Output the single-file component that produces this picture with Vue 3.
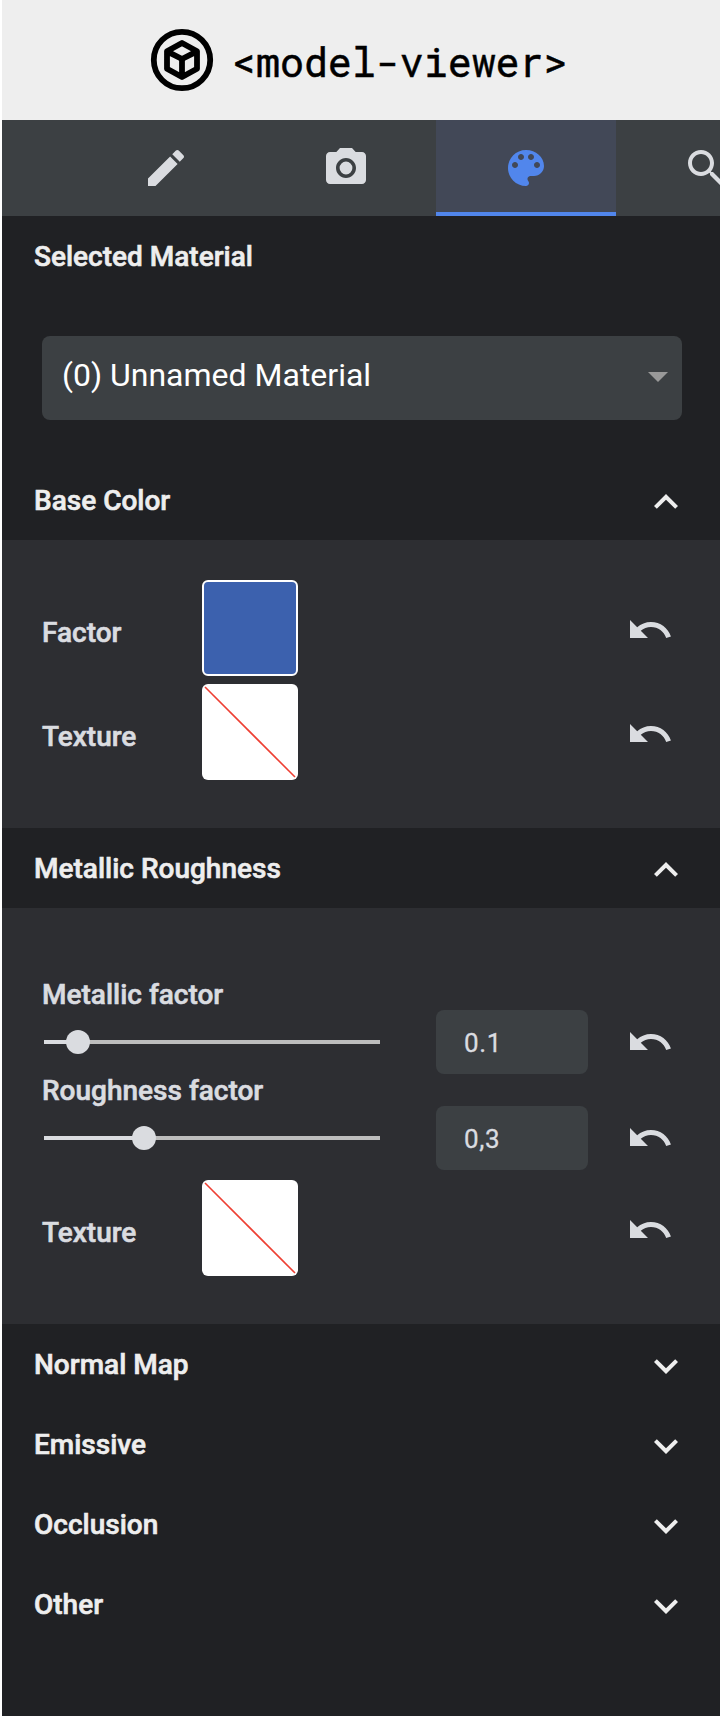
<script setup>
import { ref } from 'vue'

const ICONS = {
  edit: 'M3 17.25V21h3.75L17.81 9.94l-3.75-3.75L3 17.25zM20.71 7.04c.39-.39.39-1.02 0-1.41l-2.34-2.34c-.39-.39-1.02-.39-1.41 0l-1.83 1.83 3.75 3.75 1.83-1.83z',
  camera: 'M8.8 12a3.2 3.2 0 1 0 6.4 0a3.2 3.2 0 1 0-6.4 0zM9 2L7.17 4H4c-1.1 0-2 .9-2 2v12c0 1.1.9 2 2 2h16c1.1 0 2-.9 2-2V6c0-1.1-.9-2-2-2h-3.17L15 2H9zm3 15c-2.76 0-5-2.24-5-5s2.24-5 5-5 5 2.24 5 5-2.24 5-5 5z',
  palette: 'M12 3c-4.97 0-9 4.03-9 9s4.03 9 9 9c.83 0 1.5-.67 1.5-1.5 0-.39-.15-.74-.39-1.01-.23-.26-.38-.61-.38-.99 0-.83.67-1.5 1.5-1.5H16c2.76 0 5-2.24 5-5 0-4.42-4.03-8-9-8zm-5.5 9c-.83 0-1.5-.67-1.5-1.5S5.67 9 6.5 9 8 9.67 8 10.5 7.33 12 6.5 12zm3-4C8.67 8 8 7.33 8 6.5S8.67 5 9.5 5s1.5.67 1.5 1.5S10.33 8 9.5 8zm5 0c-.83 0-1.5-.67-1.5-1.5S13.67 5 14.5 5s1.5.67 1.5 1.5S15.33 8 14.5 8zm3 4c-.83 0-1.5-.67-1.5-1.5S16.67 9 17.5 9s1.5.67 1.5 1.5-.67 1.5-1.5 1.5z',
  search: 'M15.5 14h-.79l-.28-.27C15.41 12.59 16 11.11 16 9.5 16 5.91 13.09 3 9.5 3S3 5.91 3 9.5 5.91 16 9.5 16c1.61 0 3.09-.59 4.23-1.57l.27.28v.79l5 4.99L20.49 19l-4.99-5zm-6 0C7.01 14 5 11.99 5 9.5S7.01 5 9.5 5 14 7.01 14 9.5 11.99 14 9.5 14z',
  up: 'M12 8l-6 6 1.41 1.41L12 10.83l4.59 4.58L18 14z',
  down: 'M16.59 8.59L12 13.17 7.41 8.59 6 10l6 6 6-6z',
  undo: 'M12.5 8c-2.65 0-5.05.99-6.9 2.6L2 7v9h9l-3.62-3.62c1.39-1.16 3.16-1.88 5.12-1.88 3.54 0 6.55 2.31 7.6 5.5l2.37-.78C21.08 11.03 17.15 8 12.5 8z',
}

const tabs = ['edit', 'camera', 'palette', 'search']
const activeTab = ref('palette')

const sliders = [
  { label: 'Metallic factor', value: '0.1', position: 34 },
  { label: 'Roughness factor', value: '0,3', position: 100 },
]
const closed = ['Normal Map', 'Emissive', 'Occlusion', 'Other']
</script>

<template>
  <div class="app">
    <header class="brand">
      <svg class="logo" viewBox="0 0 64 64">
        <circle cx="32" cy="32" r="28.2" fill="none" stroke="#000" stroke-width="5.8" />
        <path
          d="M32 15L47 23.3V40.7L32 49L17 40.7V23.3ZM17 23.3L32 31L47 23.3M32 31V49"
          fill="none" stroke="#000" stroke-width="5.8" stroke-linejoin="round"
        />
      </svg>
      <span class="title">&lt;model-viewer&gt;</span>
    </header>

    <nav class="tabs">
      <button
        v-for="t in tabs" :key="t" class="tab" :class="{ active: t === activeTab }"
        @click="activeTab = t"
      >
        <svg class="icon" viewBox="0 0 24 24"><path :d="ICONS[t]" /></svg>
      </button>
    </nav>

    <div class="section">Selected Material</div>
    <div class="select">
      <span>(0) Unnamed Material</span>
      <svg class="caret" viewBox="0 0 20 10"><path d="M0 0h20L10 10z" /></svg>
    </div>

    <div class="section">
      Base Color
      <svg class="icon chevron" viewBox="0 0 24 24"><path :d="ICONS.up" /></svg>
    </div>
    <div class="panel base">
      <div class="row">
        <span class="label">Factor</span>
        <div class="swatch color"></div>
        <svg class="icon undo" viewBox="0 0 24 24"><path :d="ICONS.undo" /></svg>
      </div>
      <div class="row">
        <span class="label">Texture</span>
        <svg class="swatch" viewBox="0 0 96 96"><path class="slash" d="M3 3L93 93" /></svg>
        <svg class="icon undo" viewBox="0 0 24 24"><path :d="ICONS.undo" /></svg>
      </div>
    </div>

    <div class="section">
      Metallic Roughness
      <svg class="icon chevron" viewBox="0 0 24 24"><path :d="ICONS.up" /></svg>
    </div>
    <div class="panel rough">
      <div v-for="s in sliders" :key="s.label" class="slider-row">
        <div class="slider-col">
          <div class="slider-label">{{ s.label }}</div>
          <div class="track">
            <div class="fill" :style="{ width: s.position + 'px' }"></div>
            <div class="thumb"></div>
          </div>
        </div>
        <div class="field">{{ s.value }}</div>
        <svg class="icon" viewBox="0 0 24 24"><path :d="ICONS.undo" /></svg>
      </div>
      <div class="row">
        <span class="label">Texture</span>
        <svg class="swatch" viewBox="0 0 96 96"><path class="slash" d="M3 3L93 93" /></svg>
        <svg class="icon undo" viewBox="0 0 24 24"><path :d="ICONS.undo" /></svg>
      </div>
    </div>

    <div v-for="c in closed" :key="c" class="section">
      {{ c }}
      <svg class="icon chevron" viewBox="0 0 24 24"><path :d="ICONS.down" /></svg>
    </div>
  </div>
</template>

<style>
body {
  background: #fff;
  overflow: hidden;
}
</style>

<style scoped>
.app {
  box-sizing: border-box;
  width: 720px;
  height: 1716px;
  border-left: 2px solid #fff;
  background: #202124;
  font-family: Roboto, sans-serif;
  color: #dadce0;
  overflow: hidden;
}
.brand {
  display: flex;
  align-items: center;
  height: 120px;
  padding-left: 148px;
  background: #eee;
  color: #000;
}
.logo {
  width: 64px;
  height: 64px;
}
.title {
  margin: 2px 0 0 18px;
  font: 40px "Roboto Mono", "DejaVu Sans Mono", monospace;
  letter-spacing: -0.04px;
  white-space: nowrap;
  -webkit-text-stroke: 0.5px currentColor;
}
.tabs {
  display: flex;
  height: 96px;
  padding-left: 74px;
  background: #3c4043;
}
.tab {
  display: flex;
  flex: 0 0 180px;
  align-items: center;
  justify-content: center;
  padding: 4px 0 0;
  border: 0;
  border-bottom: 4px solid transparent;
  background: none;
  color: #dadce0;
}
.tab.active {
  border-color: #5186ec;
  background: #424857;
  color: #5186ec;
}
.icon {
  flex: none;
  width: 48px;
  height: 48px;
  fill: currentColor;
}
.section {
  display: flex;
  align-items: center;
  justify-content: space-between;
  height: 80px;
  padding: 0 30px 0 32px;
  font-size: 28px;
  font-weight: 500;
  color: #eee;
  -webkit-text-stroke: 0.6px currentColor;
}
.chevron {
  margin-top: 4px;
}
.select {
  display: flex;
  align-items: center;
  justify-content: space-between;
  box-sizing: border-box;
  width: 640px;
  height: 84px;
  margin: 40px 0 40px 40px;
  padding: 0 14px 6px 20px;
  border-radius: 8px;
  background: #3c4043;
  color: #fff;
  font-size: 32px;
}
.caret {
  width: 20px;
  height: 10px;
  margin-top: 4px;
  fill: #999;
}
.panel {
  display: flex;
  flex-direction: column;
  box-sizing: border-box;
  background: #2d2e32;
  font-size: 28px;
  font-weight: 500;
}
.base {
  height: 288px;
  padding: 40px 46px 0 40px;
  gap: 8px;
}
.rough {
  height: 416px;
  padding: 66px 46px 0 40px;
}
.row {
  display: flex;
  align-items: center;
  height: 96px;
}
.label {
  width: 160px;
  margin-top: 8px;
  -webkit-text-stroke: 0.6px currentColor;
}
.swatch {
  box-sizing: border-box;
  width: 96px;
  height: 96px;
  border-radius: 6px;
  background: #fff;
}
.color {
  border: 2px solid #fff;
  background: #3c61ae;
}
.slash {
  stroke: #ee3f33;
  stroke-width: 1.6;
}
.undo {
  margin: 4px 0 0 auto;
}
.slider-row {
  display: flex;
  align-items: flex-end;
  height: 96px;
  padding-bottom: 4px;
  box-sizing: border-box;
}
.slider-row .icon {
  margin-left: auto;
}
.slider-col {
  width: 340px;
  height: 92px;
}
.slider-label {
  height: 40px;
  line-height: 42px;
  -webkit-text-stroke: 0.6px currentColor;
}
.track {
  display: flex;
  align-items: center;
  width: 336px;
  height: 4px;
  margin: 26px 0 0 2px;
  background: #bdbdbd;
}
.fill {
  height: 4px;
  background: #dadce0;
}
.thumb {
  flex: none;
  width: 24px;
  height: 24px;
  margin-left: -12px;
  border-radius: 50%;
  background: #dadce0;
}
.field {
  box-sizing: border-box;
  width: 152px;
  height: 64px;
  margin: 0 0 -8px 54px;
  padding-left: 28px;
  border-radius: 8px;
  background: #3c4043;
  font-size: 26px;
  font-weight: 400;
  letter-spacing: 0.6px;
  line-height: 66px;
  -webkit-text-stroke: 0.3px currentColor;
}
.rough .row {
  margin-top: 14px;
}
</style>
